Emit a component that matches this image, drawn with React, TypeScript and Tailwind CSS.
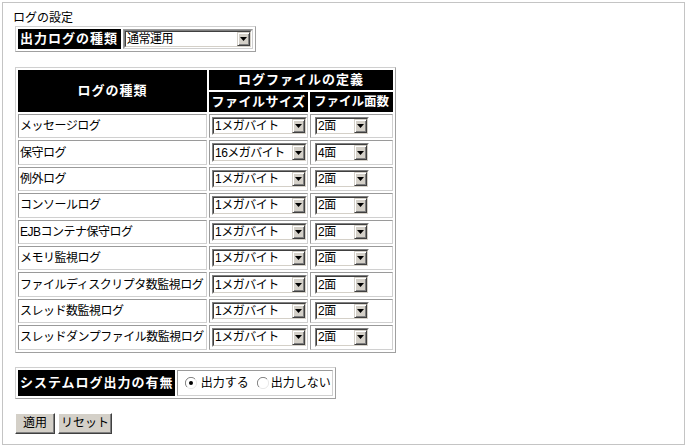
import React from 'react';

const rows: [string, string, string][] = [
  ['メッセージログ', '1メガバイト', '2面'],
  ['保守ログ', '16メガバイト', '4面'],
  ['例外ログ', '1メガバイト', '2面'],
  ['コンソールログ', '1メガバイト', '2面'],
  ['EJBコンテナ保守ログ', '1メガバイト', '2面'],
  ['メモリ監視ログ', '1メガバイト', '2面'],
  ['ファイルディスクリプタ数監視ログ', '1メガバイト', '2面'],
  ['スレッド数監視ログ', '1メガバイト', '2面'],
  ['スレッドダンプファイル数監視ログ', '1メガバイト', '2面'],
];

// classic win32 style combo box
function FakeSelect({ value, className }: { value: string; className: string }) {
  return (
    <div
      className={`flex border border-t-[#808080] border-l-[#808080] border-b-white border-r-white bg-white ${className}`}
    >
      <div className="flex flex-1 border border-t-[#404040] border-l-[#404040] border-b-[#d4d0c8] border-r-[#d4d0c8]">
        <span className="flex flex-1 items-center pl-[1px] text-[12px] leading-none tracking-[-0.5px] whitespace-nowrap">
          {value}
        </span>
        <span className="flex w-[13px] items-center justify-center border border-t-[#d4d0c8] border-l-[#d4d0c8] border-b-[#404040] border-r-[#404040] bg-[#d4d0c8] shadow-[inset_1px_1px_0_#ffffff,inset_-1px_-1px_0_#808080]">
          <svg width="7" height="4" viewBox="0 0 7 4">
            <path d="M0 0H7L3.5 4Z" fill="#000" />
          </svg>
        </span>
      </div>
    </div>
  );
}

function Radio({ checked }: { checked?: boolean }) {
  return (
    <svg width="12" height="12" viewBox="0 0 12 12" className="shrink-0">
      <circle cx="6" cy="6" r="5.5" fill="#fff" />
      <path d="M10 2A5.5 5.5 0 0 0 2 10" stroke="#808080" strokeWidth="1" fill="none" />
      <path d="M2 10A5.5 5.5 0 0 0 10 2" stroke="#e8e8e8" strokeWidth="1" fill="none" />
      {checked && <circle cx="6" cy="6" r="2" fill="#000" />}
    </svg>
  );
}

// base header cell; size and tracking are given per cell
const th = 'bg-black text-white font-bold leading-[18px] border border-black whitespace-nowrap p-0';
const td =
  'border border-t-[#9a9a9a] border-l-[#9a9a9a] border-b-[#d0d0d0] border-r-[#d0d0d0] bg-white p-0';
const tableBox =
  'border-separate border-spacing-[2px] border border-t-[#d0d0d0] border-l-[#d0d0d0] border-b-[#a0a0a0] border-r-[#a0a0a0]';

function Button({ label, className }: { label: string; className: string }) {
  return (
    <button
      className={`h-[21px] bg-[#d4d0c8] border border-t-white border-l-white border-b-[#404040] border-r-[#404040] shadow-[inset_-1px_-1px_0_#808080] text-[12px] leading-none ${className}`}
    >
      {label}
    </button>
  );
}

export default function App() {
  return (
    <div className="bg-white font-['Liberation_Sans','Noto_Sans_CJK_JP',sans-serif] text-black">
      <div className="ml-[2px] mt-[2px] h-[443px] w-[683px] border border-[#c4c4c4] pl-[10px] pt-[7px]">
        <div className="text-[12px] leading-[16px]">ログの設定</div>

        <table className={`ml-[2px] ${tableBox}`}>
          <tbody>
            <tr>
              <th className={`${th} w-[103px] text-left pl-[1px] text-[13px] tracking-[1px]`}>出力ログの種類</th>
              <td className={td}>
                <FakeSelect value="通常運用" className="w-[128px] h-[18px]" />
              </td>
            </tr>
          </tbody>
        </table>

        <table className={`ml-[2px] mt-[15px] table-fixed w-[381px] ${tableBox}`}>
          <colgroup>
            <col className="w-[189px]" />
            <col className="w-[99px]" />
            <col className="w-[83px]" />
          </colgroup>
          <tbody>
            <tr>
              <th rowSpan={2} className={`${th} text-[13px] tracking-[1px]`}>
                ログの種類
              </th>
              <th colSpan={2} className={`${th} h-[20px] text-[13px] tracking-[1px]`}>
                ログファイルの定義
              </th>
            </tr>
            <tr>
              <th className={`${th} h-[20px] text-[13px] tracking-[0.5px]`}>ファイルサイズ</th>
              <th className={`${th} h-[20px] text-[12.5px] tracking-[0px]`}>ファイル面数</th>
            </tr>
            {rows.map(([name, size, count]) => (
              <tr key={name}>
                <td className={`${td} pl-[1px] text-[12px] tracking-[-0.5px] whitespace-nowrap overflow-visible`}>
                  {name}
                </td>
                <td className={`${td} pl-[2px] py-[2px]`}>
                  <FakeSelect value={size} className="w-[95px] h-[18.4px]" />
                </td>
                <td className={`${td} pl-[4px] py-[2px]`}>
                  <FakeSelect value={count} className="w-[54px] h-[18.4px]" />
                </td>
              </tr>
            ))}
          </tbody>
        </table>

        <table className={`ml-[2px] mt-[14px] ${tableBox}`}>
          <tbody>
            <tr>
              <th className={`${th} w-[155px] h-[26px] text-left pl-[1px] text-[13px] tracking-[1px]`}>
                システムログ出力の有無
              </th>
              <td className={`${td} w-[156px]`}>
                <div className="flex items-center pl-[7px] text-[12px]">
                  <Radio checked />
                  <span className="ml-[4px]">出力する</span>
                  <span className="ml-[8px]">
                    <Radio />
                  </span>
                  <span className="ml-[2px]">出力しない</span>
                </div>
              </td>
            </tr>
          </tbody>
        </table>

        <div className="ml-[2px] mt-[14px] flex gap-[3px]">
          <Button label="適用" className="w-[40px]" />
          <Button label="リセット" className="w-[54px]" />
        </div>
      </div>
    </div>
  );
}
